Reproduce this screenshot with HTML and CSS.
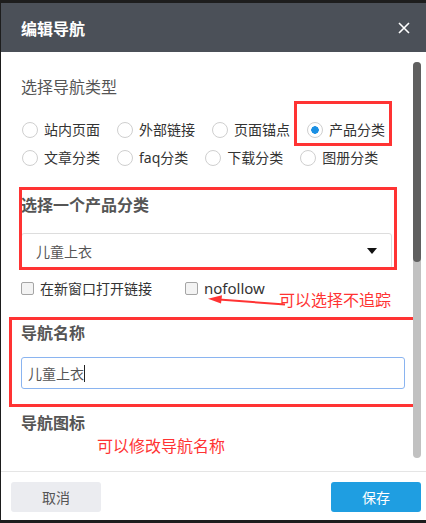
FILE: index.html
```html
<!DOCTYPE html>
<html lang="zh-CN">

<head>
  <meta charset="UTF-8">
  <meta name="viewport" content="width=device-width, initial-scale=1.0">
  <title>编辑导航</title>
  <link rel="stylesheet" href="styles.css">
</head>

<body>
  <div class="modal">
    <div class="modal-head">
      <h2>编辑导航</h2>
      <button class="close-btn" type="button">
        <svg width="12" height="12" viewBox="0 0 12 12">
          <path d="M1 1L11 11M11 1L1 11" stroke="#fff" stroke-width="1.6" fill="none" />
        </svg>
      </button>
    </div>

    <div class="modal-main">
      <div class="modal-body">
        <h3 class="plain-title">选择导航类型</h3>

        <!-- nav type radios -->
        <div class="radio-group">
          <label class="radio-item"><input type="radio" name="type"><span>站内页面</span></label>
          <label class="radio-item"><input type="radio" name="type"><span>外部链接</span></label>
          <label class="radio-item"><input type="radio" name="type"><span>页面锚点</span></label>
          <label class="radio-item marked"><input type="radio" name="type" checked><span>产品分类</span></label>
          <label class="radio-item"><input type="radio" name="type"><span>文章分类</span></label>
          <label class="radio-item"><input type="radio" name="type"><span>faq分类</span></label>
          <label class="radio-item"><input type="radio" name="type"><span>下载分类</span></label>
          <label class="radio-item"><input type="radio" name="type"><span>图册分类</span></label>
        </div>

        <div class="section section-category">
          <h3>选择一个产品分类</h3>
          <div class="select">
            <span>儿童上衣</span>
            <span class="caret"></span>
          </div>
        </div>

        <div class="check-row">
          <label class="check-item"><input type="checkbox"><span>在新窗口打开链接</span></label>
          <label class="check-item check-latin"><input type="checkbox"><span>nofollow</span></label>
        </div>

        <div class="section section-name">
          <h3>导航名称</h3>
          <div class="text-input">儿童上衣<span class="cursor"></span></div>
        </div>

        <h3 class="icon-title">导航图标</h3>
        <p class="note note-name">可以修改导航名称</p>

        <!-- annotation over the checkbox row -->
        <div class="note-follow">
          <svg width="80" height="14" viewBox="0 0 80 14">
            <path d="M12 6.6L78 11.5" stroke="#f33" stroke-width="2" fill="none" />
            <path d="M1 5.8L15 2.2L14 10.6Z" fill="#f33" />
          </svg>
          <span class="note">可以选择不追踪</span>
        </div>
      </div>

      <div class="scrollbar">
        <div class="scrollbar-thumb"></div>
      </div>
    </div>

    <div class="modal-foot">
      <button class="btn btn-cancel" type="button">取消</button>
      <button class="btn btn-save" type="button">保存</button>
    </div>
  </div>
</body>

</html>
```

FILE: styles.css
```css
body {
  margin: 0;
  padding: 3px 0 0 1px;
  background-color: #1d1d1d;
  font-family: 'Noto Sans', 'Noto Sans CJK SC', sans-serif;
  color: #333;
  height: 100vh;
  box-sizing: border-box;
  overflow: hidden;
}

.modal {
  display: flex;
  flex-direction: column;
  height: 517px;
  background-color: #fff;
}

.modal-head {
  height: 49px;
  flex-shrink: 0;
  display: flex;
  align-items: center;
  justify-content: space-between;
  padding: 0 16px 0 20px;
  background-color: #4b5058;
}

.modal-head h2 {
  margin: 0;
  font-size: 16px;
  line-height: 20px;
  font-weight: bold;
  color: #fff;
  font-family: 'Noto Sans CJK SC', sans-serif;
}

.close-btn {
  border: none;
  background: none;
  padding: 0;
  width: 12px;
  height: 12px;
  display: flex;
}

.modal-main {
  flex: 1;
  min-height: 0;
  display: flex;
}

.modal-body {
  flex: 1;
  overflow: hidden;
  position: relative;
  padding: 25px 0 0 20px;
}

/* drawn scrollbar, content is longer than the dialog */
.scrollbar {
  width: 8px;
  margin: 10px 5px 13px 0;
  background-color: #c1c1c1;
  border-radius: 4px;
}

.scrollbar-thumb {
  height: 200px;
  background-color: #5f5f5f;
  border-radius: 4px;
}

h3 {
  margin: 0;
  font-size: 16px;
  line-height: 20px;
  font-weight: bold;
  color: #555;
}

.plain-title {
  font-weight: normal;
}

.radio-group {
  display: flex;
  flex-wrap: wrap;
  margin-top: 19px;
}

.radio-item {
  display: inline-flex;
  align-items: center;
  height: 28px;
  margin-right: 16px;
  font-size: 14px;
  color: #333;
}

.radio-item input {
  appearance: none;
  width: 16px;
  height: 16px;
  margin: 0 6px 0 1px;
  border: 1px solid #cfcfcf;
  border-radius: 50%;
  background-color: #fff;
}

.radio-item input:checked {
  background: radial-gradient(circle, #1a8fe3 0 3.5px, #fff 4px);
}

.radio-item span {
  line-height: 20px;
}

.marked {
  position: relative;
}

.marked::after {
  content: '';
  position: absolute;
  top: -15px;
  bottom: -2px;
  left: -12px;
  right: -7px;
  border: 3px solid #f33;
}

.section {
  position: relative;
}

.section::after {
  content: '';
  position: absolute;
  border: 3px solid #f33;
  pointer-events: none;
}

.section-category {
  margin-top: 23px;
}

.section-category::after {
  top: -8px;
  bottom: -1px;
  left: -2px;
  right: 16px;
}

.select {
  display: flex;
  align-items: center;
  justify-content: space-between;
  height: 36px;
  box-sizing: border-box;
  margin: 18px 21px 0 0;
  padding: 0 14px;
  border: 1px solid #ddd;
  border-radius: 3px;
  font-size: 14px;
  color: #555;
}

.caret {
  width: 0;
  height: 0;
  border-left: 5px solid transparent;
  border-right: 5px solid transparent;
  border-top: 6px solid #111;
}

.check-row {
  display: flex;
  align-items: center;
  height: 20px;
  margin-top: 9px;
}

.check-item {
  display: inline-flex;
  align-items: center;
  font-size: 14px;
  color: #333;
  margin-right: 33px;
}

.check-item input {
  appearance: none;
  width: 13px;
  height: 13px;
  margin: 0 6px 0 0;
  border: 1px solid #a5a5a5;
  border-radius: 2px;
  background-color: #f3f3f3;
}

.check-latin span {
  font-size: 15px;
}

.section-name {
  margin-top: 25px;
}

.section-name::after {
  top: -6px;
  bottom: -18px;
  left: -12px;
  right: -3px;
}

.text-input {
  display: flex;
  align-items: center;
  height: 32px;
  box-sizing: border-box;
  margin: 14px 8px 0 0;
  padding: 0 6px;
  border: 1px solid #8ab4f0;
  border-radius: 3px;
  font-size: 14px;
  color: #555;
}

.cursor {
  width: 1px;
  height: 17px;
  background-color: #222;
}

.icon-title {
  margin-top: 24px;
}

.note {
  font-size: 16px;
  line-height: 20px;
  color: #f33;
}

.note-name {
  margin: 3px 0 0 76px;
}

.note-follow {
  position: absolute;
  top: 238px;
  left: 206px;
  display: flex;
  align-items: center;
}

.note-follow svg {
  margin-right: -8px;
}

.modal-foot {
  flex-shrink: 0;
  display: flex;
  justify-content: space-between;
  align-items: flex-start;
  padding: 10px 5px 8px 10px;
  border-top: 1px solid #e5e5e5;
}

.btn {
  width: 90px;
  height: 30px;
  border: none;
  border-radius: 3px;
  font-size: 14px;
  font-family: 'Noto Sans CJK SC', sans-serif;
}

.btn-cancel {
  background-color: #ebecf0;
  color: #555;
}

.btn-save {
  background-color: #1f9ee1;
  color: #fff;
}
```
